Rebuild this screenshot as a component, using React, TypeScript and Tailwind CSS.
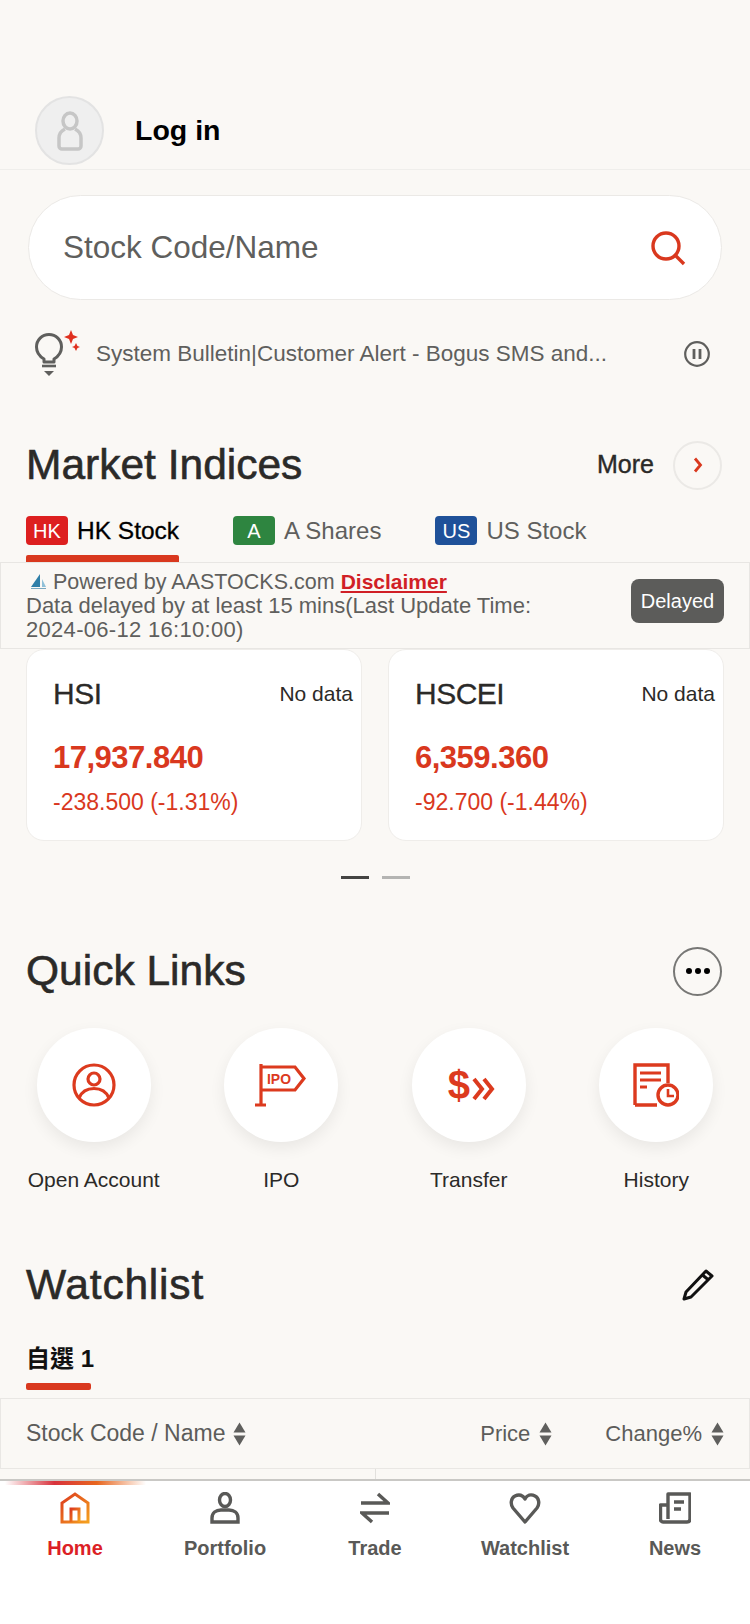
import type { ReactNode } from "react";

const font = { sans: "font-['Liberation_Sans','Noto_Sans_CJK_TC',sans-serif]" };

function Sort() {
	return (
		<svg width="13" height="24" viewBox="0 0 13 24" className="fill-[#5f5f5d]">
			<path d="M6.5 0.5 12.5 10.5H0.5Z" />
			<path d="M0.5 13.5H12.5L6.5 23.5Z" />
		</svg>
	);
}

function Badge({ label, color }: { label: string; color: string }) {
	return (
		<span
			className={`flex h-[29px] w-[42px] shrink-0 items-center justify-center rounded-[4px] text-[20px] text-white ${color}`}
		>
			{label}
		</span>
	);
}

function SectionTitle({ children }: { children: ReactNode }) {
	return (
		<h2 className="text-[42.5px] leading-[48px] font-medium text-[#2b2a28] [-webkit-text-stroke:0.6px_#2b2a28]">
			{children}
		</h2>
	);
}

function IndexCard({
	name,
	price,
	change,
}: {
	name: string;
	price: string;
	change: string;
}) {
	return (
		<div className="h-[192px] w-[336px] shrink-0 rounded-[18px] border border-[#efedea] bg-white pt-[26px] pr-[8px] pl-[26px]">
			<div className="flex items-center justify-between">
				<span className="text-[30px] leading-[36px] tracking-[-0.5px] text-[#2b2a28] [-webkit-text-stroke:0.3px_#2b2a28]">
					{name}
				</span>
				<span className="text-[21px] leading-[36px] text-[#2b2a28]">
					No data
				</span>
			</div>
			<p className="mt-[27px] text-[31px] leading-[38px] font-bold tracking-[-0.5px] text-[#d9381e]">
				{price}
			</p>
			<p className="mt-[10px] text-[23px] leading-[30px] text-[#d9381e]">
				{change}
			</p>
		</div>
	);
}

function QuickLink({ label, icon }: { label: string; icon: ReactNode }) {
	return (
		<div className="flex w-[187.5px] shrink-0 flex-col items-center">
			<div className="flex h-[114px] w-[114px] items-center justify-center rounded-full bg-white shadow-[0_6px_16px_rgba(0,0,0,0.07)]">
				{icon}
			</div>
			<span className="mt-[26px] text-[21px] leading-[24px] text-[#2b2a28]">
				{label}
			</span>
		</div>
	);
}

function NavItem({
	label,
	icon,
	active = false,
}: {
	label: string;
	icon: ReactNode;
	active?: boolean;
}) {
	return (
		<div className="flex w-[150px] flex-col items-center">
			<div className="flex h-[32px] items-center justify-center">{icon}</div>
			<span
				className={`mt-[12px] text-[20px] leading-[24px] font-bold ${active ? "text-[#dc1f26]" : "text-[#595957]"}`}
			>
				{label}
			</span>
		</div>
	);
}

export default function App() {
	return (
		<div
			className={`flex h-[1624px] w-[750px] flex-col overflow-hidden bg-[#faf8f5] ${font.sans}`}
		>
			{/* login */}
			<div className="flex h-[170px] items-end border-b border-[#efeeeb] pb-[4px] pl-[35px]">
				<div className="flex h-[69px] w-[69px] items-center justify-center rounded-full border-2 border-[#e3e3e3] bg-[#efefef]">
					<svg width="26" height="40" viewBox="0 0 26 40" fill="none" stroke="#c6c6c6" strokeWidth="3.5">
						<ellipse cx="13" cy="10" rx="7" ry="8" />
						<path d="M8 18C4 20 2 23 2 27V35C2 37 3.5 38 5 38H21C22.5 38 24 37 24 35V27C24 23 22 20 18 18" />
					</svg>
				</div>
				<span className="mb-[17px] ml-[31px] text-[28.5px] leading-[36px] font-bold text-black">
					Log in
				</span>
			</div>

			{/* search */}
			<div className="mx-[28px] mt-[25px] flex h-[105px] items-center justify-between rounded-full border border-[#ebe9e6] bg-white pr-[35px] pl-[34px]">
				<span className="text-[31.5px] text-[#5f5f5d]">Stock Code/Name</span>
				<svg width="36" height="36" viewBox="0 0 36 36" fill="none" stroke="#d9381e" strokeWidth="3.4">
					<circle cx="16" cy="16" r="13" />
					<path d="M25 25 34 34" />
				</svg>
			</div>

			{/* bulletin */}
			<div className="mt-[30px] flex h-[48px] items-center pr-[40px] pl-[35px]">
				<svg width="46" height="48" viewBox="0 0 46 48" fill="none" className="shrink-0">
					<path
						d="M9 29C4 26 1.500 22 1.500 17C1.500 10 7 4.500 14 4.500C21 4.500 26.500 10 26.500 17C26.500 22 24 26 19 29V32H9Z"
						stroke="#5f5f5d"
						strokeWidth="3"
						strokeLinejoin="round"
					/>
					<path d="M7 36H21" stroke="#5f5f5d" strokeWidth="2.600" />
					<path d="M9 41H19L14 46Z" fill="#5f5f5d" />
					<path d="M36 0 38 5 43 7 38 9 36 14 34 9 29 7 34 5Z" fill="#e0301e" />
					<path d="M41 13 42.500 16 45 17 42.500 18 41 21 39.500 18 37 17 39.500 16Z" fill="#e0301e" />
				</svg>
				<span className="ml-[15px] flex-1 text-[22.5px] whitespace-nowrap text-[#5f5f5d]">
					System Bulletin|Customer Alert - Bogus SMS and...
				</span>
				<svg width="26" height="26" viewBox="0 0 26 26" fill="none" stroke="#5f5f5d" strokeWidth="2.200">
					<circle cx="13" cy="13" r="11.800" />
					<path d="M10 8V18M16 8V18" strokeWidth="2.800" />
				</svg>
			</div>

			{/* market indices */}
			<div className="mt-[63px] flex h-[48px] items-center justify-between pr-[28px] pl-[26px]">
				<SectionTitle>Market Indices</SectionTitle>
				<div className="flex items-center">
					<span className="text-[25px] font-medium text-[#2b2a28] [-webkit-text-stroke:0.4px_#2b2a28]">
						More
					</span>
					<span className="ml-[19px] flex h-[49px] w-[49px] items-center justify-center rounded-full border-2 border-[#ebe9e6]">
						<svg width="10" height="16" viewBox="0 0 10 16" fill="none" stroke="#d9381e" strokeWidth="2.800">
							<path d="M2 1.500 7.500 8 2 14.500" />
						</svg>
					</span>
				</div>
			</div>

			<div className="mt-[27px] flex h-[46px] pl-[26px]">
				<div className="flex w-[153px] flex-col justify-between">
					<div className="flex items-center whitespace-nowrap">
						<Badge label="HK" color="bg-[#dd1f1f]" />
						<span className="ml-[9px] text-[24.5px] leading-[29px] font-medium text-black [-webkit-text-stroke:0.3px_#000]">
							HK Stock
						</span>
					</div>
					<div className="h-[7px] rounded-t-[2px] bg-[#d9381e]" />
				</div>
				<div className="ml-[54px] flex h-[29px] items-center">
					<Badge label="A" color="bg-[#2e8540]" />
					<span className="ml-[9px] text-[24px] leading-[29px] text-[#5f5f5d]">
						A Shares
					</span>
				</div>
				<div className="ml-[54px] flex h-[29px] items-center">
					<Badge label="US" color="bg-[#1f5199]" />
					<span className="ml-[9px] text-[24px] leading-[29px] text-[#5f5f5d]">
						US Stock
					</span>
				</div>
			</div>

			<div className="flex h-[87px] items-center justify-between border border-[#e8e6e3] pl-[25px]">
				<div className="text-[22px] leading-[24px] text-[#5f5f5d]">
					<div className="flex items-center text-[21.5px]">
						<svg width="26" height="18" viewBox="0 0 26 18" className="mr-[1px]">
							<path d="M14 1V14H5Z" fill="#2f7fa8" />
							<path d="M16 6 20 14H16Z" fill="#8fc0d8" />
							<path d="M5 15H20V16H5Z" fill="#7aa8c0" />
						</svg>
						<span>Powered by AASTOCKS.com</span>
						<span className="ml-[6px] text-[21px] font-bold text-[#d11f26] underline">
							Disclaimer
						</span>
					</div>
					<p>Data delayed by at least 15 mins(Last Update Time:</p>
					<p className="tracking-[0.3px]">2024-06-12 16:10:00)</p>
				</div>
				<span className="mr-[25px] mb-[10px] flex h-[44px] w-[93px] shrink-0 items-center justify-center rounded-[8px] bg-[#5c5c5a] text-[20px] text-white">
					Delayed
				</span>
			</div>

			<div className="flex gap-[26px] pl-[26px]">
				<IndexCard name="HSI" price="17,937.840" change="-238.500 (-1.31%)" />
				<IndexCard name="HSCEI" price="6,359.360" change="-92.700 (-1.44%)" />
			</div>

			<div className="mt-[35px] flex justify-center gap-[13px]">
				<span className="h-[3px] w-[28px] bg-[#444442]" />
				<span className="h-[3px] w-[28px] bg-[#b4b4b2]" />
			</div>

			{/* quick links */}
			<div className="mt-[68px] flex h-[48px] items-center justify-between pr-[28px] pl-[26px]">
				<SectionTitle>Quick Links</SectionTitle>
				<span className="flex h-[49px] w-[49px] items-center justify-center gap-[3px] rounded-full border-2 border-[#777775]">
					<i className="h-[6px] w-[6px] rounded-full bg-black" />
					<i className="h-[6px] w-[6px] rounded-full bg-black" />
					<i className="h-[6px] w-[6px] rounded-full bg-black" />
				</span>
			</div>

			<div className="mt-[33px] flex">
				<QuickLink
					label="Open Account"
					icon={
						<svg width="44" height="44" viewBox="0 0 44 44" fill="none" stroke="#dc3a1e" strokeWidth="3.200">
							<circle cx="22" cy="22" r="20" />
							<circle cx="22" cy="16" r="6" />
							<path d="M7 35C10 28 16 25.500 22 25.500C28 25.500 34 28 37 35" />
						</svg>
					}
				/>
				<QuickLink
					label="IPO"
					icon={
						<svg width="52" height="44" viewBox="0 0 52 44" fill="none" stroke="#dc3a1e" strokeWidth="3.200">
							<path d="M6 1V42M0 42H11" />
							<path d="M6 4H40L49 15.500 40 27H6" />
							<text
								x="12"
								y="21"
								fill="#dc3a1e"
								stroke="none"
								fontSize="15"
								fontWeight="700"
								fontFamily="Liberation Sans"
								textLength="24"
								lengthAdjust="spacingAndGlyphs"
							>
								IPO
							</text>
						</svg>
					}
				/>
				<QuickLink
					label="Transfer"
					icon={
						<div className="flex items-center pl-[6px] text-[#dc3a1e]">
							<span className="text-[40px] leading-[44px] font-bold">$</span>
							<svg width="24" height="24" viewBox="0 0 24 24" fill="none" stroke="#dc3a1e" strokeWidth="4" className="mt-[8px] ml-[2px]">
								<path d="M2 2 10 12 2 22M12 2 20 12 12 22" />
							</svg>
						</div>
					}
				/>
				<QuickLink
					label="History"
					icon={
						<svg width="46" height="44" viewBox="0 0 46 44" fill="none" stroke="#dc3a1e" strokeWidth="3.400">
							<path d="M2 42V2H35V20M2 42H24" />
							<path d="M7 10H28M7 17H28" strokeWidth="3" />
							<path d="M7 24H14" strokeWidth="3" />
							<circle cx="35" cy="32" r="10" fill="white" />
							<path d="M35 26V33H41" strokeWidth="2.600" />
						</svg>
					}
				/>
			</div>

			{/* watchlist */}
			<div className="mt-[69px] flex h-[48px] items-center justify-between pr-[36px] pl-[26px]">
				<SectionTitle>
					<span className="tracking-[0.8px]">Watchlist</span>
				</SectionTitle>
				<svg width="32" height="32" viewBox="0 0 32 32" fill="none" stroke="#111" strokeWidth="3" strokeLinejoin="round">
					<path d="M24 2 30 7 9 28 2 30 4 23Z" />
					<path d="M20.500 6 26.500 11" />
				</svg>
			</div>

			<div className="mt-[35px] ml-[26px] flex w-[65px] flex-col">
				<span className="text-center text-[24px] leading-[30px] font-bold whitespace-nowrap text-[#111]">
					自選 1
				</span>
				<div className="mt-[9px] h-[7px] rounded-[2px] bg-[#d9381e]" />
			</div>

			<div className="mt-[8px] flex h-[71px] items-center border border-[#e9e7e4] pr-[25px] pl-[25px] text-[22px] text-[#5c5c5a]">
				<span className="text-[23px]">Stock Code / Name</span>
				<span className="mr-auto ml-[8px]">
					<Sort />
				</span>
				<span>Price</span>
				<span className="mr-[53px] ml-[9px]">
					<Sort />
				</span>
				<span>Change%</span>
				<span className="ml-[9px]">
					<Sort />
				</span>
			</div>

			<div className="flex h-[10px] justify-center">
				<div className="w-px bg-[#e2e0dd]" />
			</div>

			{/* bottom nav */}
			<div className="relative flex-1 border-t-2 border-[#c9c8c5] bg-white pt-[11px]">
				<div className="absolute top-0 left-[5px] h-[4px] w-[141px] bg-[linear-gradient(90deg,rgba(220,50,50,0)_0%,#d8323c_35%,#e8661e_65%,rgba(248,190,60,0)_100%)]" />
				<div className="flex">
					<NavItem
						active
						label="Home"
						icon={
							<svg width="30" height="32" viewBox="0 0 30 32" fill="none" strokeWidth="3">
								<defs>
									<linearGradient id="home" x1="0" y1="0" x2="1" y2="1">
										<stop offset="0" stopColor="#dc3a1e" />
										<stop offset="1" stopColor="#f5a01e" />
									</linearGradient>
								</defs>
								<path d="M2 30V11L15 2 28 11V30Z" stroke="url(#home)" />
								<path d="M11 30V17H19V30" stroke="url(#home)" />
							</svg>
						}
					/>
					<NavItem
						label="Portfolio"
						icon={
							<svg width="30" height="32" viewBox="0 0 30 32" fill="none" stroke="#595957" strokeWidth="3.400">
								<ellipse cx="15" cy="8" rx="5.500" ry="6.500" />
								<path d="M2 30V26C2 21 6 18 11 18H19C24 18 28 21 28 26V30Z" />
							</svg>
						}
					/>
					<NavItem
						label="Trade"
						icon={
							<svg width="30" height="32" viewBox="0 0 30 32" fill="none" stroke="#595957" strokeWidth="3.500">
								<path d="M1 11H28L18 2" />
								<path d="M29 21H2L12 30" />
							</svg>
						}
					/>
					<NavItem
						label="Watchlist"
						icon={
							<svg width="32" height="32" viewBox="0 0 32 32" fill="none" stroke="#595957" strokeWidth="3.400" strokeLinejoin="round">
								<path d="M16 30 4 16C1 12 2 6 6 4C10 2 14 3 16 7C18 3 22 2 26 4C30 6 31 12 28 16Z" />
							</svg>
						}
					/>
					<NavItem
						label="News"
						icon={
							<svg width="32" height="32" viewBox="0 0 32 32" fill="none" stroke="#595957" strokeWidth="3.400" strokeLinejoin="round">
								<path d="M9 27V2H31V27C31 29 30 30 28 30H4C2.500 30 1.500 29 1.500 27V13H9" />
								<path d="M15 10H25M15 17H22" />
							</svg>
						}
					/>
				</div>
			</div>
		</div>
	);
}
